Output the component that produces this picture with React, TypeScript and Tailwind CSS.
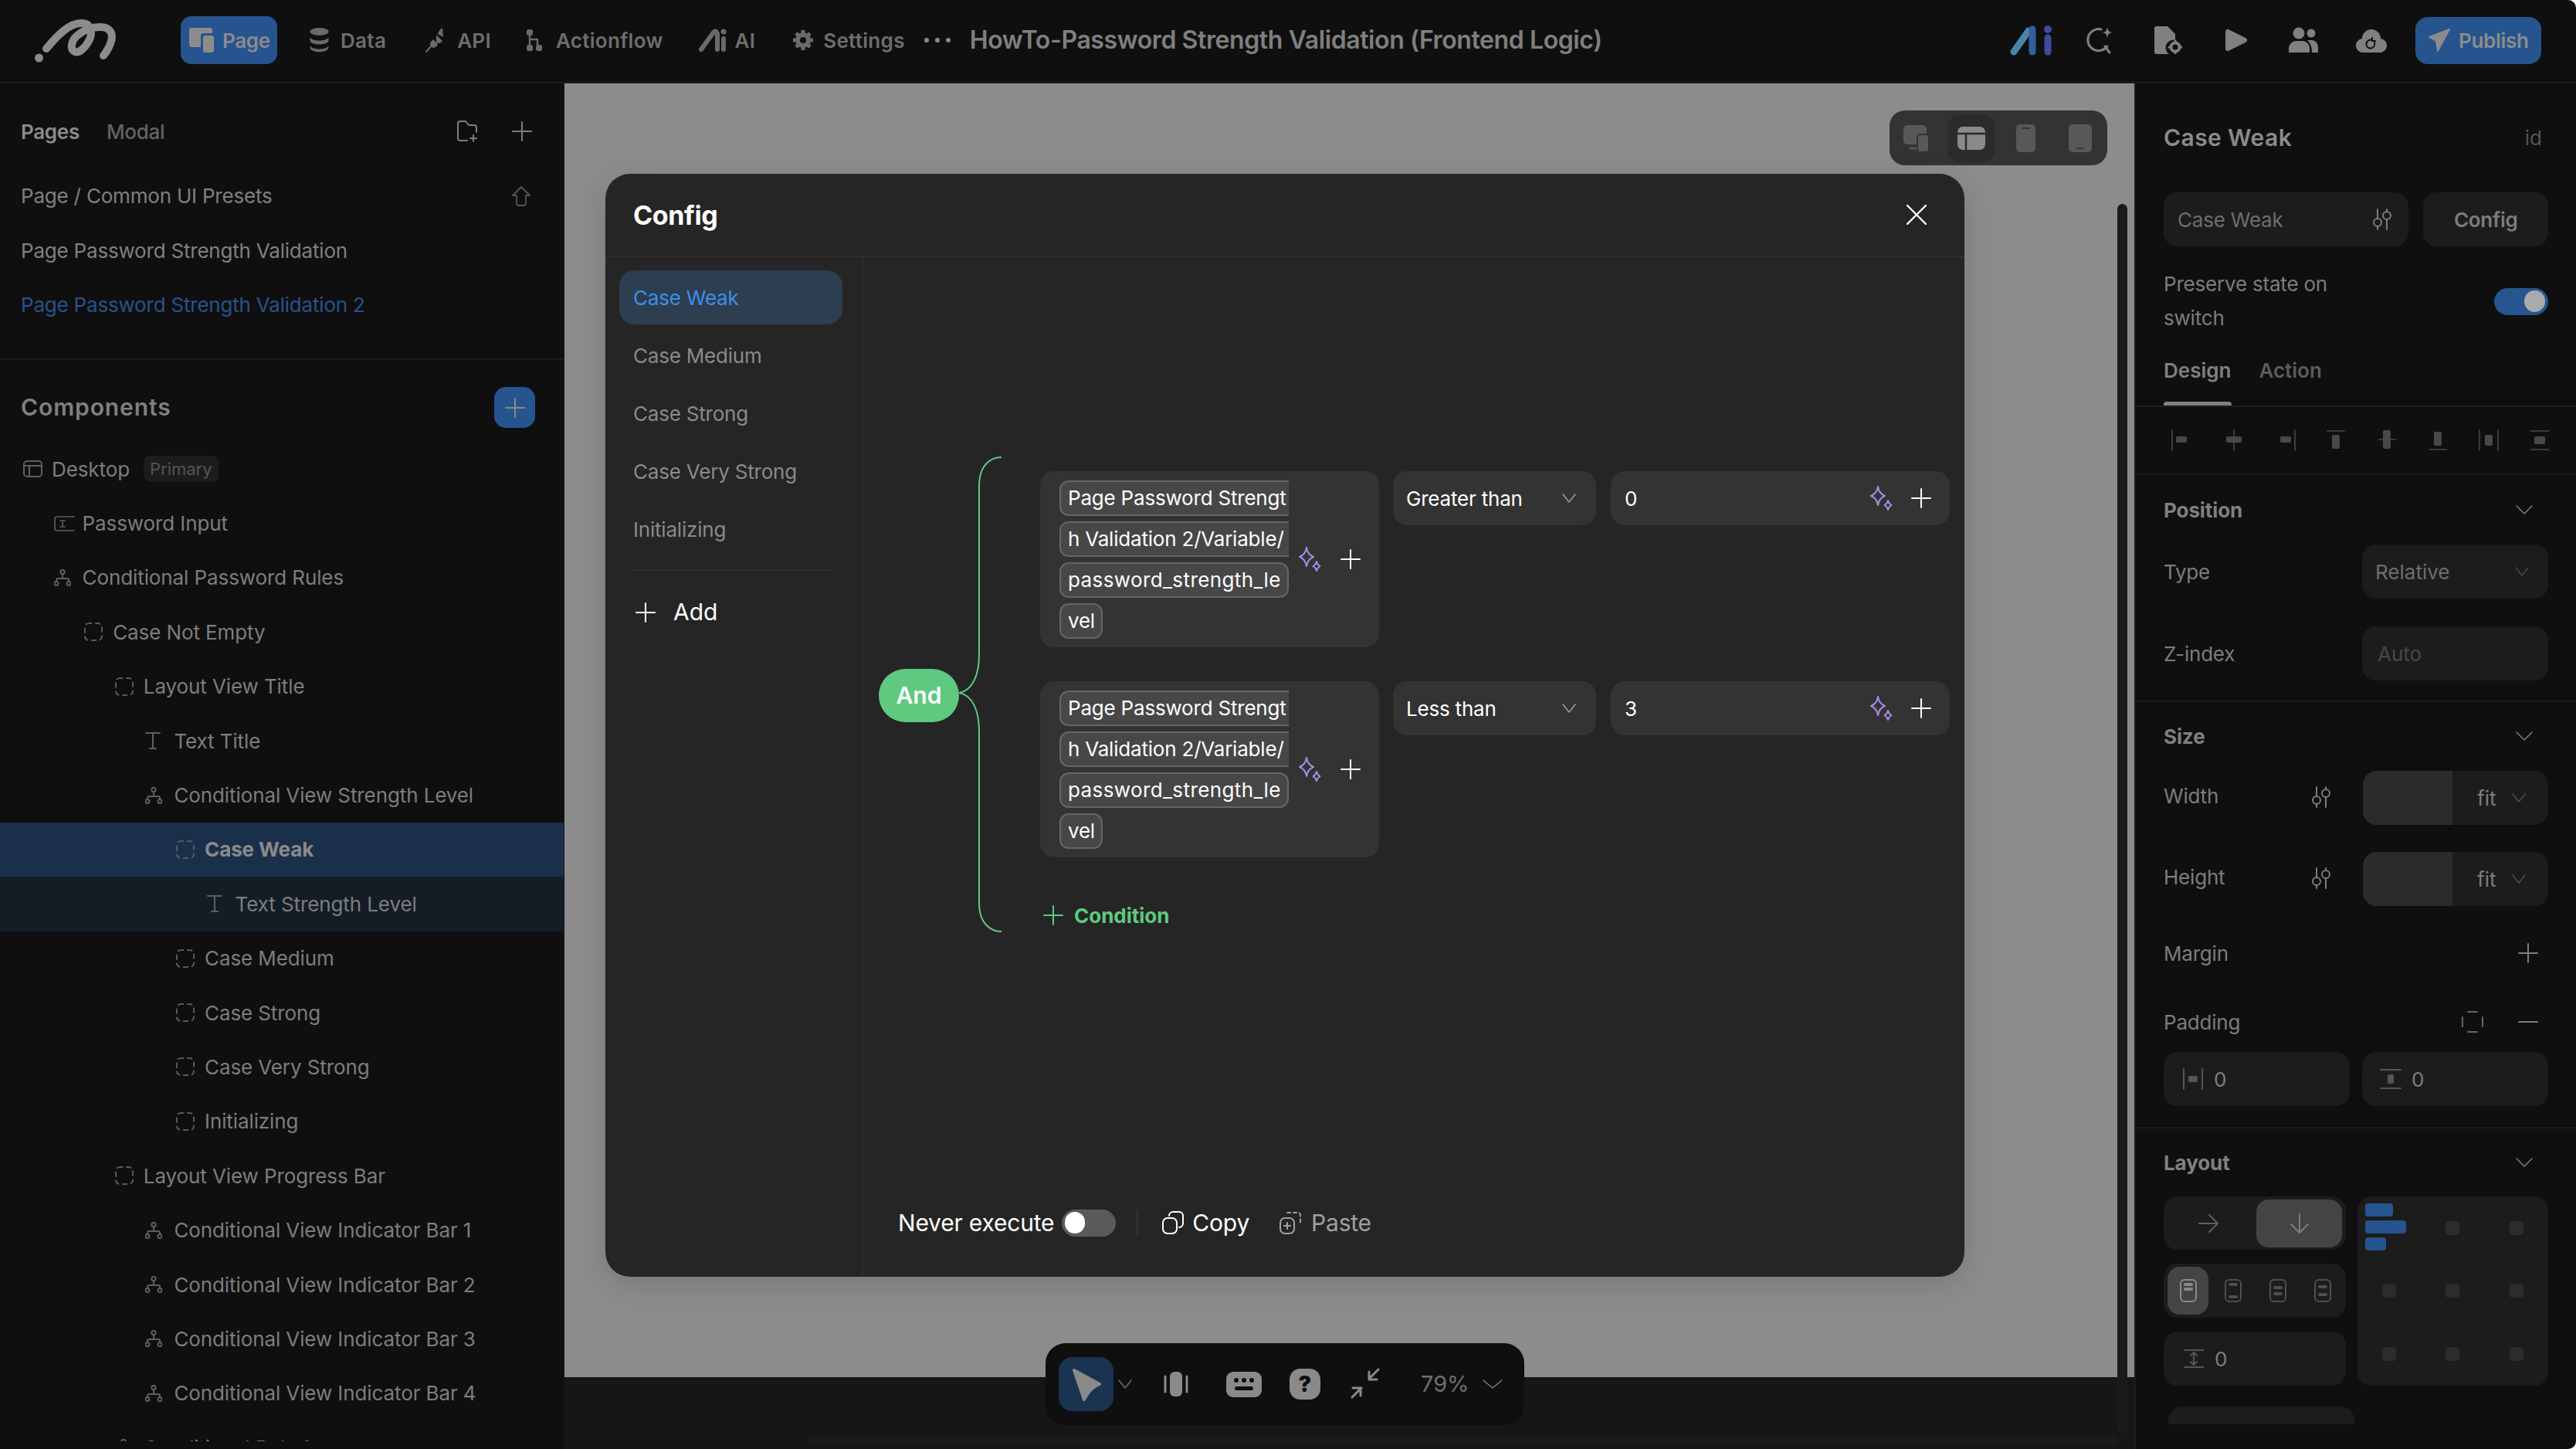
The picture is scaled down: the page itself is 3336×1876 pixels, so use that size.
import type { ReactNode } from 'react'

const Ic = ({ s = 24, h, v, className = '', children }: { s?: number; h?: number; v?: string; className?: string; children: ReactNode }) => (
  <svg width={s} height={h ?? s} viewBox={v ?? `0 0 ${s} ${h ?? s}`} fill="none" stroke="currentColor" strokeWidth="2" strokeLinecap="round" strokeLinejoin="round" className={`shrink-0 ${className}`}>
    {children}
  </svg>
)

const Plus = ({ className = '' }: { className?: string }) => (
  <Ic s={26} className={className}>
    <path d="M13 1v24M1 13h24" />
  </Ic>
)

const Chevron = ({ w = 22, className = '' }: { w?: number; className?: string }) => (
  <Ic s={w} h={12} className={className}>
    <path d={`M1 1l${w / 2 - 1} 10l${w / 2 - 1} -10`} strokeWidth="1.6" />
  </Ic>
)

const Sparkle = ({ className = '' }: { className?: string }) => (
  <Ic s={30} h={32} className={`text-[#a58be6] ${className}`}>
    <path d="M11 1c1 7 4 10 9 12c-5 2-8 5-9 12c-1-7-4-10-9-12c5-2 8-5 9-12z" />
    <path d="M24 19c.5 3 2 4.500 4.500 6c-2.500 1.500-4 3-4.500 6c-.5-3-2-4.500-4.500-6c2.500-1.500 4-3 4.500-6z" />
  </Ic>
)

const Sliders = ({ className = '' }: { className?: string }) => (
  <Ic s={28} className={className}>
    <path d="M8 1v11M8 23v4M20 1v2M20 15v12" />
    <circle cx="8" cy="18" r="5" />
    <circle cx="20" cy="9" r="5" />
  </Ic>
)

const DashedBox = () => (
  <Ic s={24} className="text-[#5a5a5a]">
    <rect x="1" y="1" width="22" height="22" rx="5" strokeDasharray="5.500 5.500" strokeDashoffset="2" />
  </Ic>
)
const TreeIcon = () => (
  <Ic s={22} className="text-[#5f5f5f]">
    <circle cx="11" cy="3.500" r="2.700" />
    <circle cx="3" cy="18.500" r="2.500" />
    <circle cx="19" cy="18.500" r="2.500" />
    <path d="M11 6v6M3 16v-2a2 2 0 012-2h12a2 2 0 012 2v2" />
  </Ic>
)
const TextIcon = () => (
  <Ic s={20} h={24} className="text-[#5f5f5f]">
    <path d="M1 2h18M10 2v20M6 22h8" />
  </Ic>
)
const InputIcon = () => (
  <Ic s={27} h={20} className="text-[#5f5f5f]">
    <path d="M26 1H4a3 3 0 00-3 3v12a3 3 0 003 3h22M8 6h6M8 14h6M11 6v8" strokeWidth="1.600" />
  </Ic>
)
const DesktopIcon = () => (
  <Ic s={25} h={22} className="text-[#5f5f5f]">
    <rect x="1" y="1" width="23" height="20" rx="4" />
    <path d="M1 7h23M8 7v14" />
  </Ic>
)

type Row = { d: number; t: string; i: 'box' | 'tree' | 'text' | 'input' | 'desk'; bg?: string; bold?: boolean }
const rows: Row[] = [
  { d: 0, t: 'Desktop', i: 'desk' },
  { d: 1, t: 'Password Input', i: 'input' },
  { d: 1, t: 'Conditional Password Rules', i: 'tree' },
  { d: 2, t: 'Case Not Empty', i: 'box' },
  { d: 3, t: 'Layout View Title', i: 'box' },
  { d: 4, t: 'Text Title', i: 'text' },
  { d: 4, t: 'Conditional View Strength Level', i: 'tree' },
  { d: 5, t: 'Case Weak', i: 'box', bg: 'bg-[#1a2f4a]', bold: true },
  { d: 6, t: 'Text Strength Level', i: 'text', bg: 'bg-[#141d26]' },
  { d: 5, t: 'Case Medium', i: 'box' },
  { d: 5, t: 'Case Strong', i: 'box' },
  { d: 5, t: 'Case Very Strong', i: 'box' },
  { d: 5, t: 'Initializing', i: 'box' },
  { d: 3, t: 'Layout View Progress Bar', i: 'box' },
  { d: 4, t: 'Conditional View Indicator Bar 1', i: 'tree' },
  { d: 4, t: 'Conditional View Indicator Bar 2', i: 'tree' },
  { d: 4, t: 'Conditional View Indicator Bar 3', i: 'tree' },
  { d: 4, t: 'Conditional View Indicator Bar 4', i: 'tree' },
  { d: 3, t: 'Conditional Rule 1', i: 'tree' },
]

const TreeRow = ({ r }: { r: Row }) => (
  <div className={`flex h-[70.4px] shrink-0 items-center ${r.bg ?? ''}`} style={{ paddingLeft: 30 + r.d * 39.600 }}>
    <div className="flex w-[37px] shrink-0 items-center">
      {r.i === 'box' && <DashedBox />}
      {r.i === 'tree' && <TreeIcon />}
      {r.i === 'text' && <TextIcon />}
      {r.i === 'input' && <InputIcon />}
      {r.i === 'desk' && <DesktopIcon />}
    </div>
    <span className={`whitespace-nowrap text-[26px] tracking-[-0.1px] ${r.bold ? 'font-bold text-[#8a8a8a]' : 'text-[#7d7d7d]'}`}>{r.t}</span>
    {r.i === 'desk' && <span className="ml-[18px] flex h-[34px] items-center rounded-lg bg-[#1c1c1c] px-2 text-[22px] text-[#555]">Primary</span>}
  </div>
)

const navs: { t: string; cls: string; gap: string; icon: ReactNode }[] = [
  { t: 'Data', cls: 'ml-[41px]', gap: 'gap-[14px]', icon: <Ic s={27} h={34} className="fill-[#6a6a6a] text-[#6a6a6a]" ><ellipse cx="13.500" cy="6" rx="12" ry="5" stroke="none" /><path d="M1.500 13c2 6 22 6 24 0v5c-2 6-22 6-24 0zM1.500 24c2 6 22 6 24 0v3c-2 7-22 7-24 0z" stroke="none" /></Ic> },
  { t: 'API', cls: 'ml-[49px]', gap: 'gap-[15px]', icon: <Ic s={28} h={34} className="text-[#6a6a6a]"><path d="M16 10l8 8c-2 3-5 4-8 2zM18 9c1-4 3-6 6-8l1 12zM12 16l6 6c-1 4-5 6-9 4-2-3-1-7 3-10zM7 27l-5 6" fill="currentColor" stroke="none" /><path d="M8 26l-5 6" /></Ic> },
  { t: 'Actionflow', cls: 'ml-[46px]', gap: 'gap-[18px]', icon: <Ic s={20} h={30} className="text-[#6a6a6a]"><rect x="0" y="1" width="8" height="8" rx="2.500" fill="currentColor" stroke="none" /><rect x="0" y="21" width="8" height="8" rx="2.500" fill="currentColor" stroke="none" /><rect x="12" y="21" width="8" height="8" rx="2.500" fill="currentColor" stroke="none" /><path d="M4 9v12M4 14h10v7" strokeWidth="2.500" /></Ic> },
  { t: 'AI', cls: 'ml-[46px]', gap: 'gap-[10px]', icon: <Ic s={37} h={30} className="text-[#6a6a6a]"><path d="M3 27L19 5c3-3 5 0 5 3v19" strokeWidth="6" /><path d="M32 13v14" strokeWidth="6" /><circle cx="32" cy="4" r="3.500" fill="currentColor" stroke="none" /></Ic> },
  { t: 'Settings', cls: 'ml-[47px]', gap: 'gap-[11px]', icon: <Ic s={30} className="text-[#6a6a6a]"><circle cx="15" cy="15" r="7" strokeWidth="6" /><path d="M15 2v4M15 24v4M2 15h4M24 15h4M6 6l3 3M21 21l3 3M6 24l3-3M21 9l3-3" strokeWidth="5" strokeLinecap="butt" /></Ic> },
]

const Chip = ({ t, cut, cls = '' }: { t: string; cut?: boolean; cls?: string }) => (
  <div className={`flex h-[46px] items-center whitespace-nowrap border-2 border-[#666] bg-[#474747] pl-[9px] text-[26px] leading-none tracking-[-0.2px] text-white ${cut ? 'w-[297px] overflow-hidden rounded-l-xl border-r-0' : 'rounded-xl'} ${cls}`}>
    {t}
  </div>
)

const Condition = ({ op, val }: { op: string; val: string }) => (
  <div className="flex items-start">
    <div className="flex h-[228px] w-[439px] items-center rounded-[18px] bg-[#333] pl-[25px]">
      <div className="flex w-[297px] flex-col gap-[7px]">
        <Chip t="Page Password Strengt" cut />
        <Chip t="h Validation 2/Variable/" cut cls="tracking-[-0.1px]" />
        <Chip t="password_strength_le" cls="w-[297px] tracking-[0.4px]" />
        <Chip t="vel" cls="w-fit pr-[8px]" />
      </div>
      <Sparkle className="ml-[12px]" />
      <Plus className="ml-[25px] text-white" />
    </div>
    <div className="ml-[18px] flex h-[70px] w-[263px] items-center justify-between rounded-[18px] bg-[#333] pl-[17px] pr-[26px] text-[26px] tracking-[-0.2px] text-white">
      {op}
      <Chevron w={18} className="text-[#9a9a9a]" />
    </div>
    <div className="ml-[19px] flex h-[70px] w-[439px] items-center rounded-[18px] bg-[#333] pl-[18px] pr-[24px] text-[26px] text-white">
      <span className="flex-1">{val}</span>
      <Sparkle className="mr-[24px]" />
      <Plus />
    </div>
  </div>
)

const Brace = () => (
  <svg width="160" height="620" viewBox="0 0 160 620" fill="none" stroke="#5fc97f" strokeWidth="2" className="absolute left-[104px] top-0">
    <path d="M55 3C40 3 26 14 26 40V258c0 26-8 47-26 50c18 3 26 24 26 50V580c0 26 14 37 29 37" />
  </svg>
)

const Label = ({ children, className = '' }: { children: ReactNode; className?: string }) => (
  <div className={`text-[26px] tracking-[-0.2px] text-[#7d7d7d] ${className}`}>{children}</div>
)

const SectionHead = ({ t }: { t: string }) => (
  <div className="flex h-[40px] items-center justify-between pr-[20px]">
    <span className="text-[26px] font-bold tracking-[-0.1px] text-[#808080]">{t}</span>
    <Chevron className="text-[#7a7a7a]" />
  </div>
)

const FieldBox = ({ children, className = '' }: { children: ReactNode; className?: string }) => (
  <div className={`flex h-[70px] w-[241px] items-center rounded-[18px] bg-[#1c1c1c] text-[26px] ${className}`}>{children}</div>
)

const SizeRow = ({ t, mt }: { t: string; mt: string }) => (
  <div className={`flex h-[70px] items-center ${mt}`}>
    <Label className="w-[191px] pb-[6px]">{t}</Label>
    <Sliders className="mb-[3px] text-[#7d7d7d]" />
    <div className="ml-[40px] flex h-[70px] w-[241px] overflow-hidden rounded-[18px] bg-[#1c1c1c] text-[#7d7d7d]">
      <div className="w-[116px] bg-[#2b2b2b]" />
      <span className="ml-[32px] self-center text-[26px]">fit</span>
      <Chevron w={18} className="ml-[20px] self-center text-[#4c4c4c]" />
    </div>
  </div>
)

const alignIcons: [string, [number, number, number, number]][] = [
  ['M1 2v26', [6, 10, 14, 8]],
  ['M15 2v26', [5, 10, 20, 8]],
  ['M28 2v26', [9, 10, 14, 8]],
  ['M4 3h22', [10, 8, 10, 18]],
  ['M4 14h22', [10, 2, 10, 24]],
  ['M4 27h22', [10, 4, 10, 18]],
  ['M3 2v26M27 2v26', [10, 8, 10, 14]],
  ['M3 3h24M3 27h24', [8, 10, 14, 10]],
]

export default function App() {
  return (
    <div className="flex h-[1876px] w-[3336px] flex-col overflow-hidden rounded-r-[10px] bg-[#0f0f0f] font-['Inter','Liberation_Sans',sans-serif]">
      {/* Top bar */}
      <header className="flex h-[108px] shrink-0 items-center border-b-2 border-[#1c1c1c] pb-[2px]">
        <svg width="140" height="75" viewBox="0 0 140 75" fill="none" stroke="#8c8c8c" strokeWidth="10" strokeLinecap="round" strokeLinejoin="round" className="ml-[30px] shrink-0">
          <circle cx="20.500" cy="60" r="5.500" fill="#8c8c8c" stroke="none" />
          <path d="M30 48C45 30 60 15 75 15C88 14 90 28 86 36C80 48 72 54 67 52C60 49 62 38 70 31C78 24 88 20 100 20C112 20 117 28 114 38C112 46 108 52 104 57" />
        </svg>
        <div className="ml-[64px] flex h-[62px] w-[125px] items-center rounded-[14px] bg-[#25548f] pl-[11px]">
          <Ic s={32} h={32} className="text-[#8c8c8c]"><path d="M3 0h24a3 3 0 013 3v4H18a3 3 0 00-3 3v15H3a3 3 0 01-3-3V3a3 3 0 013-3z" fill="currentColor" stroke="none" /><rect x="18" y="10" width="14" height="22" rx="3" fill="currentColor" stroke="none" /></Ic>
          <span className="ml-[11px] text-[26px] font-semibold tracking-[-0.3px] text-[#8c8c8c]">Page</span>
        </div>
        {navs.map(n => (
          <div key={n.t} className={`flex items-center ${n.gap} ${n.cls}`}>
            {n.icon}
            <span className="text-[26px] font-semibold tracking-[0.3px] text-[#6e6e6e]">{n.t}</span>
          </div>
        ))}
        <div className="ml-[25px] flex gap-[8px]">
          {[0, 1, 2].map(i => <span key={i} className="size-[6px] rounded-full bg-[#8a8a8a]" />)}
        </div>
        <div className="ml-[25px] whitespace-nowrap text-[32px] font-semibold tracking-[-0.4px] text-[#7f7f7f]">HowTo-Password Strength Validation (Frontend Logic)</div>
        <div className="ml-auto flex items-center pr-[45px]">
          <svg width="56" height="40" viewBox="0 0 56 40" fill="none" strokeLinecap="round" className="shrink-0">
            <path d="M5 35L24 8" stroke="#4a84a8" strokeWidth="9" />
            <path d="M29 6V35" stroke="#335f9a" strokeWidth="9" />
            <path d="M49 17V35" stroke="#3e4ba0" strokeWidth="9" />
            <circle cx="49" cy="6" r="5" fill="#3e4ba0" />
          </svg>
          <Ic s={36} className="ml-[42px] text-[#808080]">
            <path d="M20 4A14 14 0 1028 26" strokeWidth="3" />
            <path d="M25 26l6 8" strokeWidth="3" />
            <path d="M28 1c1 5 2 6 6 7c-4 1-5 2-6 7c-1-5-2-6-6-7c4-1 5-2 6-7z" fill="currentColor" stroke="none" />
          </Ic>
          <Ic s={36} className="ml-[53px] text-[#808080]">
            <path d="M3 0h14l10 10v8a10 10 0 00-8 18H3a3 3 0 01-3-3V3a3 3 0 013-3z" fill="currentColor" stroke="none" />
            <circle cx="27" cy="27" r="5.500" strokeWidth="4" />
            <path d="M27 19v2M27 33v2M19 27h2M33 27h2" strokeWidth="3" />
          </Ic>
          <Ic s={30} className="ml-[56px] text-[#808080]">
            <path d="M3 4v22l22-11z" fill="currentColor" strokeWidth="6" />
          </Ic>
          <Ic s={38} h={34} className="ml-[52px] text-[#808080]">
            <circle cx="13" cy="8" r="7.500" fill="currentColor" stroke="none" />
            <circle cx="29" cy="8" r="5.500" fill="currentColor" stroke="none" />
            <path d="M0 33v-5c0-6 5-10 10-10h7c6 0 10 4 10 10v5zM24 17h6c4 0 8 4 8 9v7h-8c0-6-1-11-6-16z" fill="currentColor" stroke="none" />
          </Ic>
          <Ic s={40} h={34} className="ml-[49px] text-[#808080]">
            <path d="M10 33a9 9 0 01-2-18a12 12 0 0124 0a9 9 0 01-2 18z" fill="currentColor" stroke="none" />
            <path d="M24 20a5.500 5.500 0 11-3-3M21 14v4h4" stroke="#0f0f0f" strokeWidth="2" />
          </Ic>
          <div className="ml-[37px] flex h-[61px] w-[163px] items-center rounded-[16px] bg-[#25548f] pl-[17px]">
            <Ic s={28} h={30} className="text-[#8c8c8c]"><path d="M27 1L1 11l9 5 2 13z" fill="currentColor" strokeWidth="2" /></Ic>
            <span className="ml-[11px] text-[26px] font-semibold tracking-[-0.3px] text-[#8c8c8c]">Publish</span>
          </div>
        </div>
      </header>

      <div className="flex min-h-0 flex-1">
        {/* Left panel */}
        <aside className="flex w-[731px] shrink-0 flex-col border-r border-[#161616]">
          <div className="shrink-0 border-b-2 border-[#1c1c1c] pb-[35px] pl-[27px] pr-[41px] pt-[37px]">
            <div className="flex h-[50px] items-center">
              <span className="text-[26px] font-semibold tracking-[-0.3px] text-[#8c8c8c]">Pages</span>
              <span className="ml-[35px] text-[26px] font-medium tracking-[-0.3px] text-[#636363]">Modal</span>
              <Ic s={28} h={30} className="ml-auto text-[#7d7d7d]"><path d="M14 27H5a3 3 0 01-3-3V5a3 3 0 013-3h7l4 5h7a3 3 0 013 3v6M22 20v8M18 24h8" /></Ic>
              <Plus className="ml-[44px] text-[#7d7d7d]" />
            </div>
            <div className="mt-[23px] flex flex-col">
              <div className="flex h-[71px] items-center justify-between">
                <Label className="text-[#808080]">Page / Common UI Presets</Label>
                <Ic s={28} h={28} className="text-[#555]"><path d="M14 2L3 13h5v10a3 3 0 003 3h6a3 3 0 003-3V13h5z" strokeWidth="1.800" /></Ic>
              </div>
              <Label className="flex h-[70px] items-center text-[#808080]">Page Password Strength Validation</Label>
              <Label className="flex h-[70px] items-center text-[#27538a]">Page Password Strength Validation 2</Label>
            </div>
          </div>
          <div className="flex shrink-0 items-center justify-between pl-[27px] pr-[37px] pt-[35px]">
            <span className="text-[30px] font-semibold tracking-[0.9px] text-[#808080]">Components</span>
            <div className="flex size-[53px] items-center justify-center rounded-[15px] bg-[#25548f]"><Plus className="text-[#8a8a8a]" /></div>
          </div>
          <div className="mb-[10px] mt-[18px] flex min-h-0 flex-1 flex-col overflow-hidden">
            {rows.map(r => <TreeRow key={r.t} r={r} />)}
          </div>
        </aside>

        {/* Canvas */}
        <main className="relative flex min-w-0 flex-1 flex-col">
          <div className="flex-1 bg-[#8c8c8c]" />
          <div className="h-[93px] shrink-0 bg-[#161616]" />

          {/* Scrollbars */}
          <div className="absolute left-[2011px] top-[156px] bottom-[19px] w-[13px] rounded-full bg-[#1a1a1a]" />
          <div className="absolute bottom-[5px] left-[316px] right-[22px] h-[13px] rounded-full bg-[#1a1a1a]" />

          {/* Device switcher */}
          <div className="absolute left-[1716px] top-[35px] flex h-[71px] w-[282px] items-center rounded-[20px] bg-[#333] pl-[18px]">
            <Ic s={34} h={36} className="text-[#585858]">
              <rect x="0" y="1" width="30" height="25" rx="5" fill="currentColor" stroke="none" />
              <path d="M9 31h8" strokeWidth="3" />
              <rect x="18" y="13" width="15" height="23" rx="4" fill="currentColor" stroke="#333" strokeWidth="2" />
            </Ic>
            <div className="ml-[23px] flex size-[62px] items-center justify-center rounded-[16px] bg-[#2b2b2b]">
              <Ic s={36} h={30} className="text-[#8a8a8a]"><rect x="0" y="0" width="36" height="30" rx="7" fill="currentColor" stroke="none" /><path d="M0 9h36M11 9v21" stroke="#2b2b2b" strokeWidth="2.500" strokeLinecap="butt" /></Ic>
            </div>
            <Ic s={25} h={36} className="ml-[27px] text-[#585858]"><rect x="0" y="0" width="25" height="36" rx="5" fill="currentColor" stroke="none" /><path d="M8 5h9" stroke="#333" strokeWidth="2" /></Ic>
            <Ic s={30} h={36} className="ml-[43px] text-[#585858]"><rect x="0" y="0" width="30" height="36" rx="5" fill="currentColor" stroke="none" /><path d="M11 31h8" stroke="#333" strokeWidth="2" /></Ic>
          </div>

          {/* Config modal */}
          <div className="absolute left-[53px] top-[117px] flex h-[1428px] w-[1760px] flex-col overflow-hidden rounded-[32px] bg-[#252525] shadow-[0_10px_40px_rgba(0,0,0,0.14)]">
            <div className="flex h-[108px] shrink-0 items-center justify-between border-b-2 border-[#2f2f2f] pl-[36px] pr-[49px]">
              <span className="text-[34px] font-bold tracking-[-0.4px] text-white">Config</span>
              <Ic s={26} className="text-white"><path d="M1 1l24 24M25 1L1 25" strokeWidth="2.400" /></Ic>
            </div>
            <div className="flex min-h-0 flex-1">
              <div className="w-[334px] shrink-0 border-r-2 border-[#2f2f2f] pl-[18px] pr-[25px] pt-[17px]">
                <div className="flex h-[70px] items-center rounded-[20px] bg-[#2d3e50] pl-[18px] text-[26px] tracking-[-0.2px] text-[#3d8fe8]">Case Weak</div>
                {['Case Medium', 'Case Strong', 'Case Very Strong', 'Initializing'].map(t => (
                  <div key={t} className="mt-[5px] flex h-[70px] items-center pl-[18px] text-[26px] tracking-[-0.2px] text-[#8a8a8a]">{t}</div>
                ))}
                <div className="ml-[17px] mr-[10px] mt-[17px] border-t-2 border-[#2f2f2f]" />
                <div className="ml-[21px] mt-[31px] flex items-center gap-[23px] text-[30px] font-normal text-white">
                  <Plus />Add
                </div>
              </div>
              <div className="relative flex min-w-0 flex-1 flex-col">
                <div className="absolute left-[20px] top-[256px] h-[620px] w-[1400px]">
                  <Brace />
                </div>
                <div className="absolute left-[20px] top-[533px] flex h-[69px] w-[104px] items-center justify-center rounded-full bg-[#5fc97f] text-[30px] font-semibold text-white">And</div>
                <div className="flex flex-col gap-[44px] pl-[229px] pt-[277px]">
                  <Condition op="Greater than" val="0" />
                  <Condition op="Less than" val="3" />
                  <div className="mt-[11px] flex h-[40px] items-center text-[26px] font-bold tracking-[0px] text-[#5fc97f]">
                    <Plus className="ml-[4px] mr-[14px]" />Condition
                  </div>
                </div>
                <div className="mb-[52px] ml-[45px] mt-auto flex h-[36px] items-center text-[30px] tracking-[-0.2px] text-white">
                  Never execute
                  <div className="ml-[10px] flex h-[35px] w-[70px] items-center rounded-full bg-[#5a5a5a] pl-[4px]"><span className="h-[28px] w-[26px] rounded-full bg-white" /></div>
                  <div className="ml-[27px] h-[35px] w-[2px] bg-[#333]" />
                  <Ic s={28} h={30} className="ml-[31px] text-white"><rect x="1" y="9" width="18" height="20" rx="6" /><path d="M9 6a5 5 0 015-5h8a5 5 0 015 5v10a5 5 0 01-5 5" /></Ic>
                  <span className="ml-[11px]">Copy</span>
                  <Ic s={28} h={30} className="ml-[39px] text-[#a0a0a0]"><rect x="1" y="9" width="18" height="20" rx="6" /><path d="M10 15v8M6 19h8" /><path d="M10 2h14a3 3 0 013 3v12" strokeDasharray="4 4" /></Ic>
                  <span className="ml-[13px] text-[#a0a0a0]">Paste</span>
                </div>
              </div>
            </div>
          </div>

          {/* Bottom toolbar */}
          <div className="absolute left-[623px] top-[1631px] flex h-[106px] w-[620px] items-center rounded-[26px] bg-[#0f0f0f] pl-[17px]">
            <div className="flex h-[70px] w-[71px] items-center justify-center rounded-[18px] bg-[#1a3350]">
              <Ic s={42} h={44} className="text-[#8a8a8a]"><path d="M5 4L38 22c-8 3-13 7-20 20z" fill="currentColor" strokeWidth="4" /></Ic>
            </div>
            <Chevron w={18} className="ml-[6px] text-[#6a6a6a]" />
            <Ic s={34} className="ml-[40px] text-[#8a8a8a]"><rect x="9" y="1" width="16" height="32" rx="6" fill="currentColor" stroke="none" /><path d="M3 7v20M31 7v20" strokeWidth="3" /></Ic>
            <div className="ml-[48px] flex h-[33px] w-[46px] flex-col items-center justify-center gap-[5px] rounded-[9px] bg-[#8a8a8a]">
              <div className="flex gap-[4px]"><span className="size-[6px] rounded-full bg-[#0f0f0f]" /><span className="size-[6px] rounded-full bg-[#0f0f0f]" /><span className="size-[6px] rounded-full bg-[#0f0f0f]" /></div>
              <span className="h-[5px] w-[24px] rounded-full bg-[#0f0f0f]" />
            </div>
            <div className="ml-[36px] flex h-[40px] w-[40px] items-center justify-center rounded-[14px] bg-[#8a8a8a] text-[28px] font-black leading-none text-[#0f0f0f]">?</div>
            <Ic s={42} className="ml-[37px] text-[#8a8a8a]"><path d="M38 2L26 14M26 5v10h10M4 38l12-12M5 26h10v10" strokeWidth="3" /></Ic>
            <span className="ml-[51px] text-[29px] text-[#6e6e6e]">79%</span>
            <Chevron w={26} className="ml-[17px] text-[#7a7a7a]" />
          </div>
        </main>

        {/* Right panel */}
        <aside className="flex w-[572px] shrink-0 flex-col border-l-2 border-[#1c1c1c]">
          <div className="px-[36px] pt-[50px]">
            <div className="flex h-[40px] items-center justify-between pr-[8px]">
              <span className="text-[30px] font-semibold tracking-[0.4px] text-[#8a8a8a]">Case Weak</span>
              <span className="text-[26px] text-[#555]">id</span>
            </div>
            <div className="mt-[51px] flex gap-[19px]">
              <div className="flex h-[70px] w-[318px] items-center justify-between rounded-[18px] bg-[#1c1c1c] pl-[18px] pr-[20px] text-[26px] tracking-[-0.2px] text-[#6e6e6e]">
                Case Weak<Sliders className="text-[#7d7d7d]" />
              </div>
              <div className="flex h-[70px] w-[162px] items-center justify-center rounded-[18px] bg-[#1c1c1c] text-[26px] font-semibold tracking-[-0.3px] text-[#7d7d7d]">Config</div>
            </div>
            <div className="mt-[27px] flex items-center justify-between">
              <Label className="leading-[44px]">Preserve state on<br />switch</Label>
              <div className="flex h-[35px] w-[70px] items-center justify-end rounded-full bg-[#265590] pr-[4px]"><span className="h-[28px] w-[27px] rounded-full bg-[#aaa]" /></div>
            </div>
            <div className="mt-[26px] flex items-center gap-[36px] text-[26px] font-semibold">
              <span className="text-[#808080]">Design</span>
              <span className="text-[#5c5c5c]">Action</span>
            </div>
            <div className="mt-[21px] h-[5px] w-[88px] rounded-t-sm bg-[#808080]" />
          </div>
          <div className="flex h-[90px] items-center justify-between border-y-2 border-[#1c1c1c] pl-[46px] pr-[32px]">
            {alignIcons.map(([line, r], i) => (
              <Ic key={i} s={30} className="text-[#484848]">
                <path d={line} strokeWidth="1.600" />
                <rect x={r[0]} y={r[1]} width={r[2]} height={r[3]} rx="2" fill="currentColor" stroke="none" />
              </Ic>
            ))}
          </div>
          <div className="border-b-2 border-[#1c1c1c] px-[36px] pt-[25px]">
            <SectionHead t="Position" />
            <div className="mt-[25px] flex h-[70px] items-center justify-between">
              <Label>Type</Label>
              <FieldBox className="justify-between pl-[17px] pr-[25px] text-[#6e6e6e]">Relative<Chevron w={18} className="text-[#444]" /></FieldBox>
            </div>
            <div className="mt-[36px] flex h-[70px] items-center justify-between">
              <Label>Z-index</Label>
              <FieldBox className="pl-[20px] text-[#484848]">Auto</FieldBox>
            </div>
            <div className="h-[26px]" />
          </div>
          <div className="border-b-2 border-[#1c1c1c] px-[36px] pt-[24px]">
            <SectionHead t="Size" />
            <SizeRow t="Width" mt="mt-[25px]" />
            <SizeRow t="Height" mt="mt-[35px]" />
            <div className="mt-[41px] flex h-[40px] items-center justify-between pr-[13px]">
              <Label>Margin</Label>
              <Plus className="text-[#7d7d7d]" />
            </div>
            <div className="mt-[49px] flex h-[40px] items-center justify-end pr-[13px]">
              <Label className="mr-auto">Padding</Label>
              <Ic s={28} className="mr-[45px] text-[#666]"><path d="M8 1h12M8 27h12M1 8v12M27 8v12" strokeWidth="2" /></Ic>
              <Ic s={26} className="text-[#7d7d7d]"><path d="M1 13h24" /></Ic>
            </div>
            <div className="mt-[19px] flex justify-between pb-[27px]">
              <FieldBox className="pl-[24px] text-[#7d7d7d]">
                <Ic s={28} className="mr-[13px] text-[#555]"><path d="M2 1v26M26 1v26" /><rect x="8" y="10" width="12" height="8" rx="2" fill="currentColor" stroke="none" /></Ic>0
              </FieldBox>
              <FieldBox className="pl-[23px] text-[#7d7d7d]">
                <Ic s={28} className="mr-[13px] text-[#555]"><path d="M1 2h26M1 26h26" /><rect x="10" y="8" width="8" height="12" rx="2" fill="currentColor" stroke="none" /></Ic>0
              </FieldBox>
            </div>
          </div>
          <div className="min-h-0 flex-1 overflow-hidden px-[36px] pt-[24px]">
            <SectionHead t="Layout" />
            <div className="mt-[24px] flex justify-between">
              <div className="flex w-[236px] flex-col gap-[18px]">
                <div className="flex h-[69px] items-center rounded-[18px] bg-[#1c1c1c] pl-[45px] pr-[5px]">
                  <Ic s={26} className="text-[#5f5f5f]"><path d="M1 13h24M14 2l11 11l-11 11" /></Ic>
                  <div className="ml-auto flex h-[62px] w-[111px] items-center justify-center rounded-[16px] bg-[#444]">
                    <Ic s={26} className="text-[#7d7d7d]"><path d="M13 1v24M2 14l11 11l11-11" /></Ic>
                  </div>
                </div>
                <div className="flex h-[70px] items-center gap-[5px] rounded-[18px] bg-[#1c1c1c] pl-[5px]">
                  <div className="flex h-[62px] w-[53px] items-center justify-center rounded-[16px] bg-[#444]">
                    <div className="flex h-[30px] w-[22px] flex-col gap-[2px] rounded-[6px] border-2 border-[#8a8a8a] p-[3px]"><span className="h-[4px] rounded-sm bg-[#8a8a8a]" /><span className="h-[4px] rounded-sm bg-[#8a8a8a]" /></div>
                  </div>
                  {['justify-between', 'justify-center', 'justify-around'].map(j => (
                    <div key={j} className="flex h-[62px] w-[53px] items-center justify-center">
                      <div className={`flex h-[30px] w-[22px] flex-col ${j} ${j === 'justify-center' ? 'gap-[4px]' : ''} rounded-[6px] border-2 border-[#4f4f4f] p-[3px]`}><span className="h-[4px] rounded-sm bg-[#4f4f4f]" /><span className="h-[4px] rounded-sm bg-[#4f4f4f]" /></div>
                    </div>
                  ))}
                </div>
                <div className="flex h-[70px] items-center rounded-[18px] bg-[#1c1c1c] pl-[26px] text-[26px] text-[#7d7d7d]">
                  <Ic s={26} className="mr-[14px] text-[#555]"><path d="M1 2h24M1 24h24M13 6v14M9 9l4-4l4 4M9 17l4 4l4-4" /></Ic>0
                </div>
              </div>
              <div className="relative h-[245px] w-[247px] rounded-[18px] bg-[#1c1c1c]">
                <div className="absolute left-[10px] top-[9px] flex flex-col gap-[5px]">
                  <span className="h-[17px] w-[36px] rounded-[4px] bg-[#25548f]" />
                  <span className="h-[17px] w-[53px] rounded-[4px] bg-[#25548f]" />
                  <span className="h-[17px] w-[27px] rounded-[4px] bg-[#25548f]" />
                </div>
                <div className="grid h-full w-full grid-cols-3 grid-rows-3 place-items-center">
                  {[1, 2, 3, 4, 5, 6, 7, 8, 9].map(k => <span key={k} className={`size-[18px] rounded-[4px] ${k === 1 ? '' : 'bg-[#2c2c2c]'}`} />)}
                </div>
              </div>
            </div>
            <div className="ml-[6px] mt-[27px] h-[23px] w-[241px] rounded-t-[18px] bg-[#1c1c1c]" />
          </div>
        </aside>
      </div>
    </div>
  )
}
